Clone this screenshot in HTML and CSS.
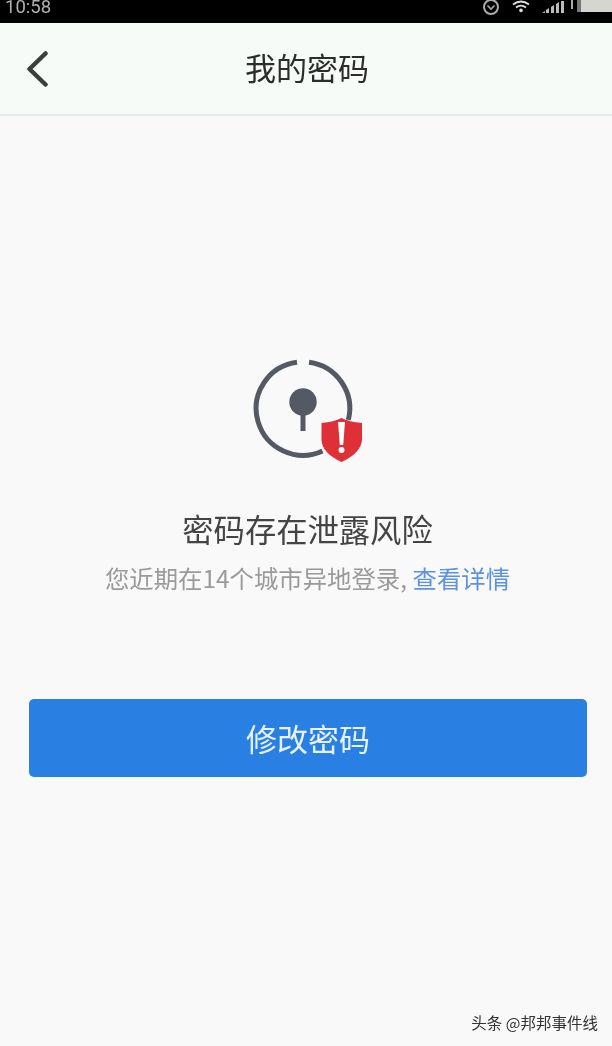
FILE: index.html
```html
<!DOCTYPE html>
<html lang="zh-CN">
<head>
<meta charset="utf-8">
<title>我的密码</title>
<link rel="stylesheet" href="styles.css">
</head>
<body>
<div class="screen">
  <div class="status">
    <span class="time">10:58</span>
    <div class="status-icons">
      <svg class="ico-alarm" width="20" height="18" viewBox="0 0 20 18"><circle cx="10" cy="7" r="7" fill="none" stroke="#aaa" stroke-width="2"/><path d="M6.500 5.500l3.500 3.500 3.500-3.500" fill="none" stroke="#aaa" stroke-width="1.600"/></svg>
      <svg class="ico-wifi" width="20" height="14" viewBox="0 0 20 14"><path d="M2 4.400Q10-1.400 18 4.400M5 7.400Q10 3.800 15 7.400" fill="none" stroke="#ddd" stroke-width="1.900"/><circle cx="10" cy="10.400" r="1.800" fill="#ddd"/></svg>
      <svg class="ico-signal" width="24" height="14" viewBox="0 0 24 14"><path d="M1 13l3-2v2zM5 13V10l3-2v5zM10 13V7l3-2v8zM15 13V4l3-2v11zM20 13V1h3v12z" fill="#bbb"/></svg>
      <div class="battery"><span class="battery-cap"></span><span class="battery-body"></span></div>
    </div>
  </div>
  <header class="nav">
    <svg class="back" width="24" height="36" viewBox="0 0 24 36"><path d="M20.500 2.500 4.500 18l16 15.500" fill="none" stroke="#3a3f3d" stroke-width="4.500" stroke-linecap="round" stroke-linejoin="round"/></svg>
    <h1 class="nav-title">我的密码</h1>
  </header>
  <main class="content">
    <svg class="risk-icon" width="114" height="108" viewBox="0 0 114 108">
      <path d="M47 6.200A46.700 46.700 0 1 0 72.500 94.900" fill="none" stroke="#545963" stroke-width="5"/>
      <path d="M59 6.200A46.700 46.700 0 0 1 98.300 64" fill="none" stroke="#545963" stroke-width="5"/>
      <circle cx="53" cy="46" r="13.700" fill="#545963"/>
      <rect x="50.500" y="54" width="5" height="21" fill="#545963"/>
      <path d="M71.500 67Q84 66 91.500 62Q99 66 112 67V84Q111 97 91.500 106Q72 97 71.500 84Z" fill="#de3036"/>
      <path d="M88 66h7l-1.800 23h-3.400z" fill="#fff"/>
      <circle cx="91.500" cy="94" r="3" fill="#fff"/>
    </svg>
    <h2 class="headline">密码存在泄露风险</h2>
    <p class="detail">您近期在14个城市异地登录, <a class="detail-link" href="#">查看详情</a></p>
    <button class="primary" type="button">修改密码</button>
  </main>
  <div class="watermark">头条 @邦邦事件线</div>
</div>
</body>
</html>
```
FILE: styles.css
```css
* { box-sizing: border-box; }
html, body { margin: 0; padding: 0; }
body {
  font-family: "Noto Sans CJK SC", "Noto Sans", "Liberation Sans", sans-serif;
  background: #f9f9f9;
}
.screen {
  position: relative;
  width: 612px;
  height: 1046px;
  overflow: hidden;
  display: flex;
  flex-direction: column;
  background: #f9f9f9;
  filter: blur(0.45px);
}
.status {
  height: 23px;
  flex: none;
  background: #000;
  display: flex;
  justify-content: space-between;
  align-items: flex-start;
  overflow: hidden;
}
.time {
  font-family: "Roboto", sans-serif;
  font-size: 18.500px;
  line-height: 15px;
  color: #b0b0b0;
  padding-left: 5px;
}
.status-icons {
  display: flex;
  align-items: flex-start;
}
.ico-wifi { margin-left: 10px; }
.ico-signal { margin-left: 10px; }
.battery {
  display: flex;
  align-items: flex-start;
  margin-left: 6px;
  width: 41px;
}
.battery-cap {
  width: 6px;
  height: 9px;
  border-left: 2px solid #aaa;
  flex: none;
}
.battery-body {
  width: 35px;
  height: 12px;
  flex: none;
  background: #d6d6d0;
  border-left: 4px solid #777;
}
.nav {
  position: relative;
  height: 93px;
  flex: none;
  background: #f7fbf7;
  border-bottom: 2px solid #e9ebe9;
  display: flex;
  align-items: center;
  justify-content: center;
  padding-bottom: 4px;
}
.back {
  position: absolute;
  left: 25px;
  top: 28px;
}
.nav-title {
  margin: 0 0 0 2px;
  font-size: 31px;
  font-weight: 400;
  line-height: 40px;
  color: #2c2c2c;
}
.content {
  flex: 1;
  display: flex;
  flex-direction: column;
  align-items: center;
  padding: 240px 0 0 3px;
}
.risk-icon {
  flex: none;
  margin-right: 2px;
}
.headline {
  margin: 45px 0 0;
  font-size: 31.300px;
  font-weight: 400;
  line-height: 40px;
  color: #444;
}
.detail {
  margin: 12px 0 0;
  font-size: 24.400px;
  line-height: 34px;
  color: #9a9a9a;
}
.detail-link {
  color: #5b93e0;
  text-decoration: none;
}
.primary {
  width: 558px;
  height: 78px;
  margin: 104px 0 0 1px;
  border: 0;
  border-radius: 5px;
  background: #2a7fe3;
  color: #e8f3ff;
  font-family: inherit;
  font-size: 31px;
  padding: 0 0 2px;
}
.watermark {
  position: absolute;
  right: 14px;
  bottom: 12px;
  font-size: 15.500px;
  line-height: 24px;
  color: #333;
}
```
